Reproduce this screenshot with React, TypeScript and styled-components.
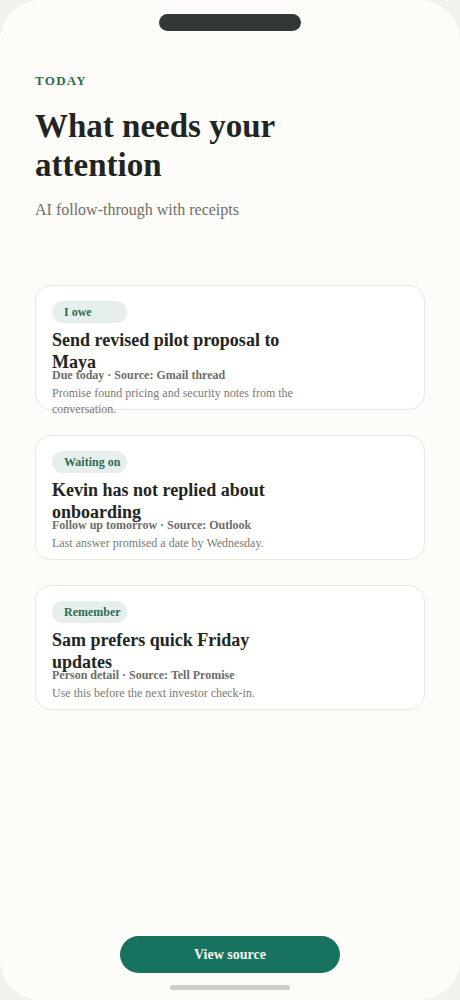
import React from 'react';
import styled, { createGlobalStyle } from 'styled-components';

type Item = {
  kind: string
  title: string
  meta: string
  note: string
}

const items: Item[] = [
  {
    kind: 'I owe',
    title: 'Send revised pilot proposal to Maya',
    meta: 'Due today · Source: Gmail thread',
    note: 'Promise found pricing and security notes from the conversation.',
  },
  {
    kind: 'Waiting on',
    title: 'Kevin has not replied about onboarding',
    meta: 'Follow up tomorrow · Source: Outlook',
    note: 'Last answer promised a date by Wednesday.',
  },
  {
    kind: 'Remember',
    title: 'Sam prefers quick Friday updates',
    meta: 'Person detail · Source: Tell Promise',
    note: 'Use this before the next investor check-in.',
  },
];

const GlobalStyle = createGlobalStyle`
  * { box-sizing: border-box; }
  body {
    margin: 0;
    background: #f2f1ec;
    font-family: "Liberation Serif", "Times New Roman", serif;
  }
`;

const Phone = styled.div`
  width: 460px;
  height: 1000px;
  border-radius: 40px;
  background: #fdfcf8;
  display: flex;
  flex-direction: column;
  padding: 14px 0 10px;
  overflow: hidden;
`;

const Notch = styled.div`
  width: 142px;
  height: 17px;
  border-radius: 9px;
  background: #323935;
  margin: 0 auto;
  flex-shrink: 0;
`;

const Header = styled.header`
  padding: 0 35px;
  margin-top: 42px;
`;

const Eyebrow = styled.div`
  font-size: 13px;
  line-height: 16px;
  font-weight: 700;
  letter-spacing: 0.1em;
  color: #2f6b55;
`;

const Heading = styled.h1`
  margin: 18px 0 0;
  max-width: 300px;
  font-size: 33px;
  line-height: 38.5px;
  font-weight: 700;
  color: #1f2521;
`;

const Subtitle = styled.p`
  margin: 15px 0 0;
  font-size: 16px;
  line-height: 22px;
  color: #6f6f6a;
`;

const List = styled.div`
  margin-top: 64px;
  padding: 0 35px;
  display: flex;
  flex-direction: column;
  gap: 25px;
`;

const Card = styled.article`
  height: 125px;
  border-radius: 16px;
  border: 1px solid #e9e7e0;
  background: #fffffe;
  padding: 15px 16px;
`;

const Body = styled.div`
  max-width: 250px;
`;

const Badge = styled.span`
  display: block;
  width: 75px;
  height: 22px;
  border-radius: 11px;
  padding-left: 12px;
  background: #e6efeb;
  color: #2f6b55;
  font-size: 12px;
  line-height: 22px;
  font-weight: 700;
  white-space: nowrap;
`;

const Title = styled.h2`
  margin: 7px 0 0;
  height: 38px;
  font-size: 18px;
  line-height: 21.6px;
  font-weight: 700;
  color: #222522;
`;

const Meta = styled.div`
  font-size: 12px;
  line-height: 14px;
  font-weight: 700;
  color: #6d6d6a;
`;

const Note = styled.p`
  margin: 3px 0 0;
  font-size: 12px;
  line-height: 16px;
  color: #7a7a76;
`;

const Spacer = styled.div`
  flex: 1;
`;

const Footer = styled.footer`
  display: flex;
  flex-direction: column;
  align-items: center;
`;

const SourceButton = styled.button`
  width: 220px;
  height: 37px;
  border: none;
  border-radius: 19px;
  background: #17735f;
  color: #f6f4ee;
  font-family: inherit;
  font-size: 14px;
  font-weight: 700;
  cursor: pointer;
`;

const HomeBar = styled.div`
  width: 120px;
  height: 5px;
  border-radius: 3px;
  background: #cfcdc8;
  margin-top: 12px;
`;

const App = () => {
  return (
    <>
      <GlobalStyle />
      <Phone>
        <Notch />
        <Header>
          <Eyebrow>TODAY</Eyebrow>
          <Heading>What needs your attention</Heading>
          <Subtitle>AI follow-through with receipts</Subtitle>
        </Header>
        <List>
          {items.map((item) => (
            <Card key={item.title}>
              <Body>
                <Badge>{item.kind}</Badge>
                <Title>{item.title}</Title>
                <Meta>{item.meta}</Meta>
                <Note>{item.note}</Note>
              </Body>
            </Card>
          ))}
        </List>
        <Spacer />
        <Footer>
          <SourceButton>View source</SourceButton>
          <HomeBar />
        </Footer>
      </Phone>
    </>
  );
};

export default App;
